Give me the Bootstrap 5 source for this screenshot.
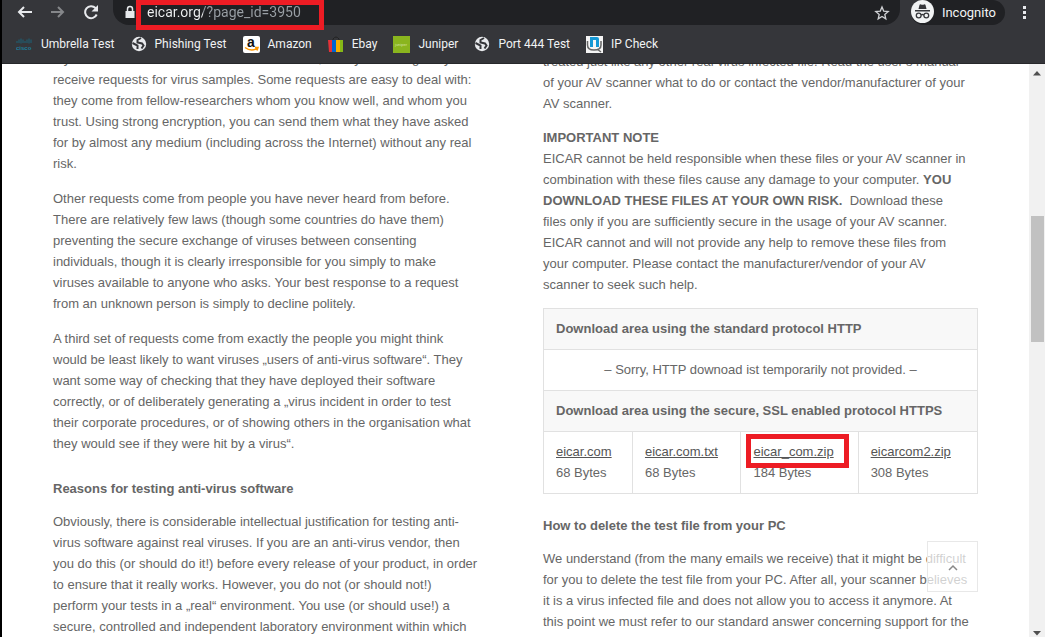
<!DOCTYPE html>
<html lang="en">
<head>
<meta charset="utf-8">
<meta name="viewport" content="width=device-width, initial-scale=1">
<title>eicar.org</title>
<link href="https://cdn.jsdelivr.net/npm/bootstrap@5.3.0/dist/css/bootstrap.min.css" rel="stylesheet">
<style>
  body { background: #fff; border-left: 2px solid #000; font-family: "Liberation Sans", Arial, sans-serif; font-size: 13px; line-height: 21px; color: #666; }
  .chrome-bar { background: #35363a; border-bottom: 1px solid #27282b; font-family: Roboto, "Segoe UI", sans-serif; font-size: 12px; line-height: 20px; color: #f1f3f4; }
  .nav-row { height: 25px; padding: 0 16px 0 14px; }
  .tool-btn { padding: 0; border: 0; background: none; color: #e8eaed; display: flex; }
  .omnibox { background: #202124; border-radius: 0 0 16px 16px; height: 25px; margin-left: 13px; padding: 0 10px 0 12px; }
  .url-field { width: 100%; border: 0; outline: 0; padding: 0; height: 24px; color: transparent; background: linear-gradient(90deg, #f1f3f4 56px, #9aa0a6 56px); -webkit-background-clip: text; background-clip: text; font-size: 14px; }
  .marked { position: absolute; border: 5px solid #ed1c24; pointer-events: none; }
  .marked-url { left: -11px; top: 0; width: 188px; height: 30px; }
  .marked-file { left: 5px; top: 2px; width: 103px; height: 34px; }
  .incognito { background: #202124; border: 0; border-radius: 16px; height: 25px; color: #f1f3f4; padding: 0 9px 0 0; margin-left: 11px; font-size: 13px; }
  .bookmarks { height: 38px; padding: 0 14px; gap: 16px; }
  .bookmarks a { color: #f1f3f4; text-decoration: none; white-space: nowrap; gap: 8px; }
  .viewer { min-height: 0; }
  .article { padding: 0 51px; }
  .article-columns { gap: 55px; }
  .text-column { flex: 1 1 0; min-width: 0; white-space: nowrap; }
  .left-text { margin-top: -16px; }
  .right-text { margin-top: -13px; }
  .text-column p { margin: 0 0 13px; }
  .left-text p { margin-bottom: 14px; }
  .text-column h2 { font-size: 13px; line-height: 21px; font-weight: 700; margin: 24px 0 12px; }
  .text-column .after-table { margin-top: 21px; }
  .files { width: 100%; border-collapse: collapse; table-layout: fixed; }
  .files th, .files td { border: 1px solid #e1e1e1; padding: 9px 12px 10px; }
  .files th { background: #f8f8f8; }
  .files a { color: #555; }
  .to-top { position: absolute; right: 51px; bottom: 45px; width: 51px; height: 51px; background: rgba(255,255,255,.7); border: 1px solid #e8e8e8; color: #888; padding: 0; }
  .scroll-track { width: 16px; background: #f1f1f1; }
  .scroll-track svg { display: block; }
  .scroll-thumb { background: #c1c1c1; width: 13px; height: 22%; margin-top: 135px; }
</style>
</head>
<body class="d-flex flex-column vh-100 overflow-hidden">
<header class="chrome-bar flex-shrink-0">
  <div class="nav-row d-flex align-items-center">
    <button class="tool-btn" aria-label="Back"><svg width="18" height="18" viewBox="0 0 18 18" fill="none" stroke="currentColor" stroke-width="2"><path d="M16 8H3M8 3L3 8l5 5"/></svg></button>
    <button class="tool-btn ms-3" aria-label="Forward"><svg width="18" height="18" viewBox="0 0 18 18" fill="none" stroke="#85878a" stroke-width="2"><path d="M1 8h12M8 3l5 5-5 5"/></svg></button>
    <button class="tool-btn ms-3" aria-label="Reload"><svg width="16" height="18" viewBox="0 0 16 18" fill="none" stroke="currentColor" stroke-width="2"><path d="M12.700 10.500A6 6 0 1 1 11.500 4l1.500 1.500"/><path d="M14 1v6.500H7.500z" fill="currentColor" stroke="none"/></svg></button>
    <div class="omnibox d-flex align-items-center flex-grow-1">
      <svg width="10" height="16" viewBox="0 0 10 16" fill="none"><path d="M.5 6h9v7h-9z" fill="#e8eaed"/><path d="M2.500 7V4a2.500 2.500 0 0 1 5 0v3" stroke="#e8eaed" stroke-width="1.500"/></svg>
      <div class="position-relative flex-grow-1 align-self-start ms-2 ps-1">
        <input class="url-field" type="text" aria-label="Address" value="eicar.org/?page_id=3950">
        <span class="marked marked-url ms-1"></span>
      </div>
      <button class="tool-btn" aria-label="Bookmark"><svg width="16" height="16" viewBox="0 0 16 16" fill="none" stroke="#d0d2d5" stroke-width="1.300"><path d="M8 2l1.700 4.100 4.500.4-3.400 2.900 1 4.400L8 11.500l-3.800 2.300 1-4.400L1.800 6.500l4.500-.4z"/></svg></button>
    </div>
    <button class="incognito d-flex align-items-center"><svg class="me-2" width="23" height="25" viewBox="0 0 23 25"><circle cx="11.500" cy="11.500" r="11.500" fill="#f1f3f4"/><path d="M7.500 9l1-4q.3-1 1.500-.6 1.500.6 3 0 1.200-.4 1.500.6l1 4zM4 10h15v1.500H4z" fill="#35363a"/><g fill="none" stroke="#35363a" stroke-width="1.300"><circle cx="7.700" cy="15.500" r="2.400"/><circle cx="15.300" cy="15.500" r="2.400"/><path d="M10 15q1.500-1 3 0"/></g></svg>Incognito</button>
    <button class="tool-btn ms-3" aria-label="Menu"><svg width="8" height="18" viewBox="0 0 8 18" fill="currentColor"><path d="M2 2h3v3H2zM2 7h3v3H2zM2 12h3v3H2z"/></svg></button>
  </div>
  <nav class="bookmarks d-flex align-items-center" aria-label="Bookmarks">
    <a class="d-flex align-items-center" href="#"><svg width="17" height="16" viewBox="0 0 17 16"><path d="M1 5v2M3 3.500V7M5 2.500v5M7 3.500V7M9 5v2M11 3.500V7M13 2.500v5M15 3.500V7" stroke="#1d6378"/><text x="0" y="14" font-size="6" font-weight="700" fill="#1d7f9c" font-family="Liberation Sans">cisco</text></svg>Umbrella Test</a>
    <a class="d-flex align-items-center" href="#"><svg width="16" height="16" viewBox="0 0 16 16"><circle cx="8" cy="8" r="7.200" fill="#e8eaed"/><path d="M10 2L6.500 4v2.500L11 7.500l1.500 2-2 3M1.500 7l5 2.500v3.500" fill="none" stroke="#35363a" stroke-width="2"/></svg>Phishing Test</a>
    <a class="d-flex align-items-center" href="#"><svg width="17" height="17" viewBox="0 0 17 17"><rect width="17" height="17" rx="2" fill="#fff"/><text x="4" y="11" font-size="14" font-weight="700" fill="#111" font-family="Liberation Sans">a</text><path d="M2 11.500q6 4.500 12 1M12 11.500h3l-1 3" fill="none" stroke="#f90" stroke-width="1.500"/></svg>Amazon</a>
    <a class="d-flex align-items-center" href="#"><svg width="16" height="17" viewBox="0 0 16 17"><path d="M5 5V3q3-4 6 0v2" fill="none" stroke="#222"/><path d="M0 4h4v12H1z" fill="#e53238"/><path d="M4 4h4v12H4z" fill="#0064d2"/><path d="M8 4h4v12H8z" fill="#f5af02"/><path d="M12 4h3v12h-3z" fill="#86b817"/></svg>Ebay</a>
    <a class="d-flex align-items-center" href="#"><svg width="17" height="17" viewBox="0 0 17 17"><path d="M0 0h17v17H0z" fill="#8ab51e"/><text x="2" y="10" font-size="4" fill="#d4e3a0" font-family="Liberation Sans">juniper</text></svg>Juniper</a>
    <a class="d-flex align-items-center" href="#"><svg width="16" height="16" viewBox="0 0 16 16"><circle cx="8" cy="8" r="7.200" fill="#e8eaed"/><path d="M10 2L6.500 4v2.500L11 7.500l1.500 2-2 3M1.500 7l5 2.500v3.500" fill="none" stroke="#35363a" stroke-width="2"/></svg>Port 444 Test</a>
    <a class="d-flex align-items-center" href="#"><svg width="17" height="17" viewBox="0 0 17 17"><path d="M0 0h17v17H0z" fill="#f5f5f5"/><path d="M1.500 5v4q0 5 6.500 5 7 0 7-5V5M11 13l4 3" fill="none" stroke="#666" stroke-width="1.500"/><path d="M4 1h7q2 0 2 2v8h-3V4H7v7H4z" fill="#1598d5"/></svg>IP Check</a>
  </nav>
</header>
<div class="viewer d-flex flex-grow-1 position-relative">
  <main class="article flex-grow-1 overflow-hidden position-relative">
    <div class="article-columns d-flex">
      <section class="text-column left-text">
        <p>If you are active in the anti-virus research field, then you will regularly<br>receive requests for virus samples. Some requests are easy to deal with:<br>they come from fellow-researchers whom you know well, and whom you<br>trust. Using strong encryption, you can send them what they have asked<br>for by almost any medium (including across the Internet) without any real<br>risk.</p>
        <p>Other requests come from people you have never heard from before.<br>There are relatively few laws (though some countries do have them)<br>preventing the secure exchange of viruses between consenting<br>individuals, though it is clearly irresponsible for you simply to make<br>viruses available to anyone who asks. Your best response to a request<br>from an unknown person is simply to decline politely.</p>
        <p>A third set of requests come from exactly the people you might think<br>would be least likely to want viruses „users of anti-virus software“. They<br>want some way of checking that they have deployed their software<br>correctly, or of deliberately generating a „virus incident in order to test<br>their corporate procedures, or of showing others in the organisation what<br>they would see if they were hit by a virus“.</p>
        <h2>Reasons for testing anti-virus software</h2>
        <p>Obviously, there is considerable intellectual justification for testing anti-<br>virus software against real viruses. If you are an anti-virus vendor, then<br>you do this (or should do it!) before every release of your product, in order<br>to ensure that it really works. However, you do not (or should not!)<br>perform your tests in a „real“ environment. You use (or should use!) a<br>secure, controlled and independent laboratory environment within which</p>
      </section>
      <section class="text-column right-text">
        <p>treated just like any other real virus infected file. Read the user’s manual<br>of your AV scanner what to do or contact the vendor/manufacturer of your<br>AV scanner.</p>
        <p><strong>IMPORTANT NOTE</strong><br>EICAR cannot be held responsible when these files or your AV scanner in<br>combination with these files cause any damage to your computer. <strong>YOU<br>DOWNLOAD THESE FILES AT YOUR OWN RISK.</strong>&nbsp; Download these<br>files only if you are sufficiently secure in the usage of your AV scanner.<br>EICAR cannot and will not provide any help to remove these files from<br>your computer. Please contact the manufacturer/vendor of your AV<br>scanner to seek such help.</p>
        <table class="files">
          <colgroup><col style="width:20.5%"><col style="width:25%"><col style="width:27%"><col style="width:27.5%"></colgroup>
          <tbody>
          <tr><th colspan="4">Download area using the standard protocol HTTP</th></tr>
          <tr><td class="text-center" colspan="4">– Sorry, HTTP downoad ist temporarily not provided. –</td></tr>
          <tr><th colspan="4">Download area using the secure, SSL enabled protocol HTTPS</th></tr>
          <tr><td><a href="#">eicar.com</a><br>68 Bytes</td><td><a href="#">eicar.com.txt</a><br>68 Bytes</td><td class="position-relative"><a href="#">eicar_com.zip</a><br>184 Bytes<span class="marked marked-file"></span></td><td><a href="#">eicarcom2.zip</a><br>308 Bytes</td></tr>
          </tbody>
        </table>
        <h2 class="after-table">How to delete the test file from your PC</h2>
        <p>We understand (from the many emails we receive) that it might be difficult<br>for you to delete the test file from your PC. After all, your scanner believes<br>it is a virus infected file and does not allow you to access it anymore. At<br>this point we must refer to our standard answer concerning support for the</p>
      </section>
    </div>
    <button class="to-top" aria-label="Back to top"><svg width="10" height="8" viewBox="0 0 10 8" fill="none" stroke="currentColor" stroke-width="1.500"><path d="M1 6l4-4 4 4"/></svg></button>
  </main>
  <div class="scroll-track d-flex flex-column align-items-center flex-shrink-0" aria-hidden="true">
    <svg width="16" height="17" viewBox="0 0 16 17"><path d="M4 11.500l4-4.500 4 4.500z" fill="#505050"/></svg>
    <div class="scroll-thumb"></div>
    <svg class="mt-auto" width="16" height="9" viewBox="0 0 16 9"><path d="M4 3l4 4.500L12 3z" fill="#505050"/></svg>
  </div>
</div>
<script src="https://cdn.jsdelivr.net/npm/bootstrap@5.3.0/dist/js/bootstrap.bundle.min.js"></script>
</body>
</html>
